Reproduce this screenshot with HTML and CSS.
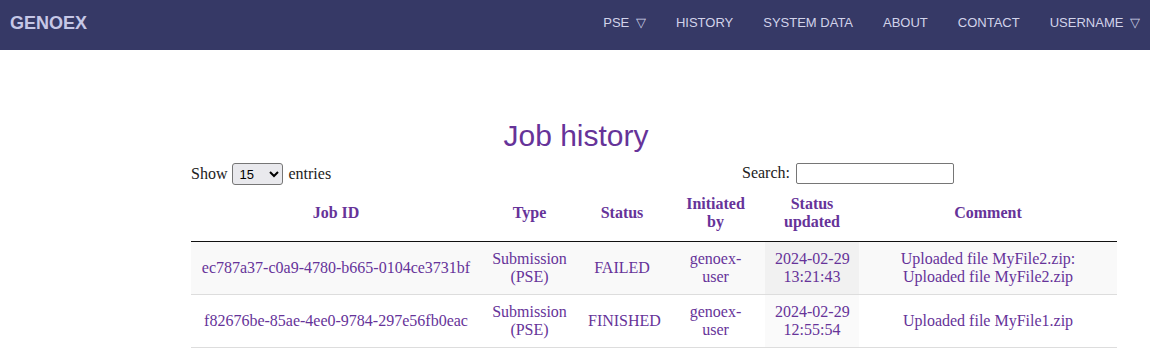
FILE: index.html
```html
<!DOCTYPE html>
<html lang="en">
<head>
  <meta charset="UTF-8">
  <title>GenoEx - Job history</title>
  <link rel="stylesheet" href="styles.css">
</head>
<body>

<div class="navbar">
  <a class="brand" href="#">GENOEX</a>
  <ul class="nav">
    <li><a href="#">PSE <span class="caret">&#9661;</span></a></li>
    <li><a href="#">HISTORY</a></li>
    <li><a href="#">SYSTEM DATA</a></li>
    <li><a href="#">ABOUT</a></li>
    <li><a href="#">CONTACT</a></li>
    <li><a href="#">USERNAME <span class="caret">&#9661;</span></a></li>
  </ul>
</div>

<h1 class="page-title">Job history</h1>

<div class="table-wrapper">
  <div class="table-controls">
    <label class="table-length">Show
      <select>
        <option>10</option>
        <option selected>15</option>
        <option>25</option>
        <option>50</option>
      </select>
      entries</label>
    <label class="table-filter">Search: <input type="search"></label>
  </div>

  <table class="jobs">
    <colgroup>
      <col class="c-id"><col class="c-type"><col class="c-status">
      <col class="c-user"><col class="c-updated"><col class="c-comment">
    </colgroup>
    <thead>
      <tr>
        <th>Job ID</th>
        <th>Type</th>
        <th>Status</th>
        <th>Initiated by</th>
        <th>Status updated</th>
        <th>Comment</th>
      </tr>
    </thead>
    <tbody>
      <tr class="odd">
        <td>ec787a37-c0a9-4780-b665-0104ce3731bf</td>
        <td>Submission (PSE)</td>
        <td>FAILED</td>
        <td class="user">genoex-user</td>
        <td class="sorting"><span class="date">2024-02-29</span> 13:21:43</td>
        <td>Uploaded file MyFile2.zip: Uploaded file MyFile2.zip</td>
      </tr>
      <tr class="even">
        <td>f82676be-85ae-4ee0-9784-297e56fb0eac</td>
        <td>Submission (PSE)</td>
        <td>FINISHED</td>
        <td class="user">genoex-user</td>
        <td class="sorting"><span class="date">2024-02-29</span> 12:55:54</td>
        <td>Uploaded file MyFile1.zip</td>
      </tr>
    </tbody>
  </table>
</div>

</body>
</html>
```

FILE: styles.css
```css
body {
  margin: 0;
  font-family: "Liberation Serif", "Times New Roman", serif;
  font-size: 16px;
  color: #663399;
  background: #fff;
}
a { text-decoration: none; }

.navbar {
  height: 50px;
  background-color: #363966;
  display: flex;
  align-items: center;
  justify-content: space-between;
  padding: 0 10px;
}
.brand {
  font-family: "Liberation Sans", Arial, sans-serif;
  font-weight: bold;
  font-size: 18px;
  color: #c6c7e6;
  margin-top: -4px;
}
.nav {
  list-style: none;
  margin: 0;
  padding: 0;
  display: flex;
  gap: 30px;
  margin-top: -6px;
}
.nav a {
  font-family: "Liberation Sans", Arial, sans-serif;
  font-size: 13px;
  color: #d2d3ea;
}
.nav .caret { margin-left: 3px; }

.page-title {
  font-family: "Liberation Sans", Arial, sans-serif;
  font-weight: normal;
  font-size: 30px;
  text-align: center;
  color: #663399;
  margin: 69px 0 10px 0;
  padding-left: 2px;
}

.table-wrapper {
  width: 926px;
  margin-left: 191px;
}
.table-controls {
  display: flex;
  justify-content: space-between;
  width: 763px;
  font-size: 16px;
  color: #222;
}
.table-length select {
  font-family: Arial, sans-serif;
  font-size: 13px;
  width: 51px;
  height: 22px;
  margin: 0 1px;
  padding: 0 2px;
  border: 1px solid #767676;
  border-radius: 3px;
  background-color: #e9e9ed;
  color: #000;
}
.table-filter input {
  width: 158px;
  height: 21px;
  box-sizing: border-box;
  margin-left: 2px;
  border: 1px solid #767676;
  border-radius: 2px;
  padding: 1px 4px;
}

table.jobs {
  width: 926px;
  table-layout: fixed;
  border-collapse: collapse;
  color: #663399;
}
.c-id { width: 290px; }
.c-type { width: 97px; }
.c-status { width: 88px; }
.c-user { width: 99px; }
.c-updated { width: 94px; }
.c-comment { width: 258px; }

table.jobs th {
  font-weight: bold;
  padding: 10px 18px;
  border-bottom: 1px solid #111;
  text-align: center;
  vertical-align: middle;
}
table.jobs td {
  padding: 8px 10px;
  text-align: center;
  vertical-align: middle;
  border-top: 1px solid #ddd;
}
table.jobs td.user { padding: 8px 16px; }
table.jobs .date { white-space: nowrap; }
table.jobs tbody tr:last-child td { border-bottom: 1px solid #ddd; }
table.jobs tr.odd { background-color: #f9f9f9; }
table.jobs tr.odd td.sorting { background-color: #f1f1f1; }
table.jobs tr.even td.sorting { background-color: #fafafa; }
```
